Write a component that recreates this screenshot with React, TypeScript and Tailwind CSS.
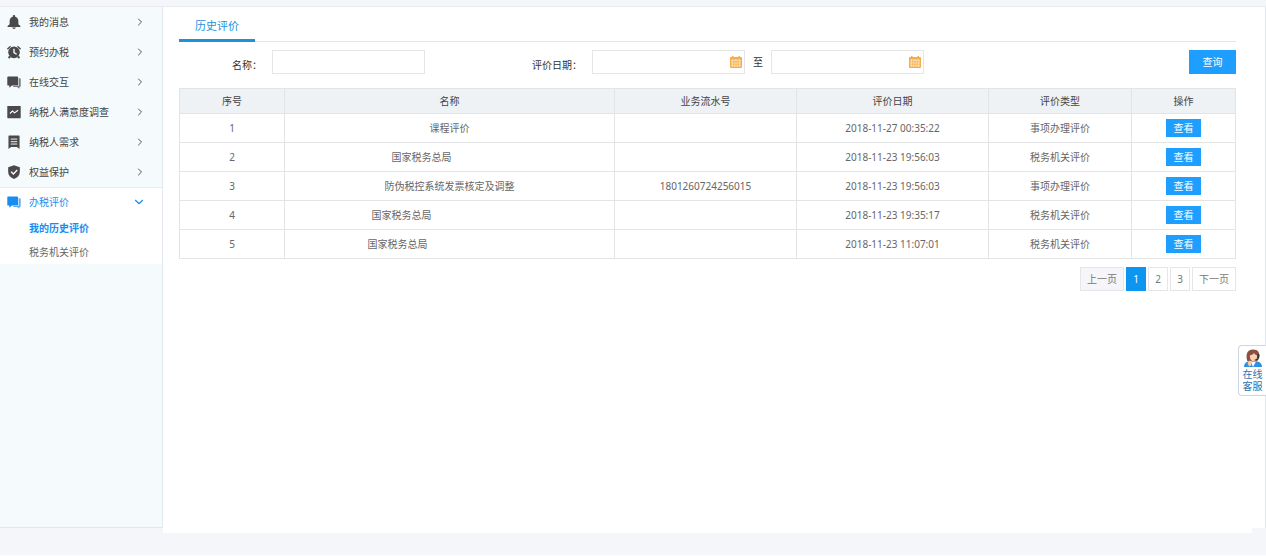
import type { ReactNode } from 'react';
import clsx from 'clsx';
import { ChevronDown, ChevronRight } from 'lucide-react';

const BellIcon = () => (
  <svg viewBox="0 0 24 24" className="size-3.5" fill="currentColor">
    <path d="M12 0c1.200 0 2 .9 2 2v.8c3.400.9 5.500 3.800 5.500 7.400V16l3.500 3v1.500H1V19l3.500-3v-5.800c0-3.600 2.100-6.500 5.500-7.400V2c0-1.100.8-2 2-2zM9 21.500h6c0 1.400-1.300 2.500-3 2.500s-3-1.100-3-2.500z" />
  </svg>
);

const ClockIcon = () => (
  <svg viewBox="0 0 24 24" className="size-3.5" fill="currentColor">
    <path fillRule="evenodd" d="M12 2.500a10 10 0 1 0 0 20 10 10 0 0 0 0-20zM10.800 6.500h2.400v5.800l4 2.600-1.300 2-5.100-3.200z" />
    <path d="M0 6 5.500 1.200l1.300 1.600L1.500 8zM24 6 18.500 1.200l-1.300 1.600L22.500 8zM4 18.500l2.500 2.500L4 23.500 1.500 21zM20 18.500 17.500 21l2.500 2.500 2.500-2.500z" />
  </svg>
);

const ChatIcon = () => (
  <svg viewBox="0 0 24 24" className="size-3.5" fill="currentColor">
    <path d="M2 2.500h15.500A1.500 1.500 0 0 1 19 4v12.500a1.500 1.500 0 0 1-1.500 1.500H8.500L4 22v-4H2A1.500 1.500 0 0 1 .5 16.500V4A1.500 1.500 0 0 1 2 2.500z" />
    <path d="M20 5.500h2A1.500 1.500 0 0 1 23.500 7v12a1.500 1.500 0 0 1-1.500 1.500h-.5v3L17 20.500h-7l1.200-1.500H18.500a1.500 1.500 0 0 0 1.500-1.500z" opacity="0.7" />
  </svg>
);

const SurveyIcon = () => (
  <svg viewBox="0 0 24 24" className="size-3.5" fill="currentColor">
    <rect x="0.500" y="1.500" width="23" height="21" rx="1" />
    <path d="M5 14.500 9.500 10.500l3.500 3 6-4.500" fill="none" stroke="#fff" strokeWidth="2" />
  </svg>
);

const NeedIcon = () => (
  <svg viewBox="0 0 24 24" className="size-3.5" fill="currentColor">
    <path d="M3.500 1h17a1 1 0 0 1 1 1v22L17 20.500H7L2.500 24V2a1 1 0 0 1 1-1z" />
    <path d="M6.500 7h11M6.500 11.500h11M6.500 15.500h11" stroke="#fff" strokeWidth="1.600" />
  </svg>
);

const ShieldIcon = () => (
  <svg viewBox="0 0 24 24" className="size-3.5" fill="currentColor">
    <path d="M12 .5 22 4v8c0 5.500-4 9.500-10 11.800C6 21.500 2 17.500 2 12V4z" />
    <path d="m7 11.500 4 4 6.500-7" fill="none" stroke="#fff" strokeWidth="2.200" />
  </svg>
);

const CalendarIcon = () => (
  <svg viewBox="0 0 12 12" className="size-3">
    <path d="M1 1h1V0h1.500v1h5V0H10v1h1a1 1 0 0 1 1 1v9a1 1 0 0 1-1 1H1a1 1 0 0 1-1-1V2a1 1 0 0 1 1-1z" fill="#f5ae4a" />
    <path d="M1.500 3.500h9v7h-9z" fill="#fdebcf" />
    <path d="M1.500 5.800h9M1.500 8.200h9M3.800 3.500v7M6 3.500v7M8.200 3.500v7" stroke="#f5ae4a" strokeWidth="0.800" />
  </svg>
);

const AgentIcon = () => (
  <svg viewBox="0 0 20 20" className="h-5 w-[18px]">
    <path d="M0 20c0-4 2.500-6 6-6.500h7.500c4 .5 6.500 2.500 6.500 6.500z" fill="#2f8fe0" />
    <path d="M7.500 13.500 10 20l3.500-6.500z" fill="#fff" />
    <path d="M3.500 13C1.500 5 4 .5 10 .5S17.500 4 16.500 9L15 13l-3 1H6z" fill="#8a5040" />
    <path d="M6.500 7c2 0 3.500-1 4.500-2.500.8 1.500 2.200 2 3.500 2.500 0 4-1.200 6.500-4 6.500S6.500 11 6.500 7z" fill="#f9d0b2" />
    <path d="M16 5.500V10c0 1.200-1.500 2.200-4 2.200" fill="none" stroke="#333" strokeWidth="1.200" />
    <rect x="15" y="5.500" width="2.200" height="4" rx="1" fill="#333" />
    <path d="M5 13.500c1.500-1 3-.5 3.500.5L8 18l-2 1.500-2-3z" fill="#f9d0b2" />
  </svg>
);

const menu: { label: string; icon: ReactNode }[] = [
  { label: '我的消息', icon: <BellIcon /> },
  { label: '预约办税', icon: <ClockIcon /> },
  { label: '在线交互', icon: <ChatIcon /> },
  { label: '纳税人满意度调查', icon: <SurveyIcon /> },
  { label: '纳税人需求', icon: <NeedIcon /> },
  { label: '权益保护', icon: <ShieldIcon /> },
];

const rows = [
  { id: 1, name: '课程评价', pad: '', serial: '', date: '2018-11-27 00:35:22', type: '事项办理评价' },
  { id: 2, name: '国家税务总局', pad: 'pr-14', serial: '', date: '2018-11-23 19:56:03', type: '税务机关评价' },
  { id: 3, name: '防伪税控系统发票核定及调整', pad: '', serial: '1801260724256015', date: '2018-11-23 19:56:03', type: '事项办理评价' },
  { id: 4, name: '国家税务总局', pad: 'pr-24', serial: '', date: '2018-11-23 19:35:17', type: '税务机关评价' },
  { id: 5, name: '国家税务总局', pad: 'pr-26', serial: '', date: '2018-11-23 11:07:01', type: '税务机关评价' },
];

function Sidebar() {
  return (
    <nav className="w-[163px] shrink-0 border-r border-b border-[#e4e7ee] bg-[#f5fafd]">
      {menu.map((item) => (
        <a key={item.label} href="#" className="flex h-[30px] items-center pl-[7px] pr-4 text-[#444]">
          <span className="text-[#4a4a4a]">{item.icon}</span>
          <span className="ml-2 flex-1">{item.label}</span>
          <ChevronRight className="size-3 text-[#555]" strokeWidth={2} />
        </a>
      ))}
      <div className="border-t border-[#e8ebf0] bg-white">
        <a href="#" className="flex h-7 items-center pl-[7px] pr-4 text-[#1a8cf0]">
          <ChatIcon />
          <span className="ml-2 flex-1">办税评价</span>
          <ChevronDown className="size-3.5" strokeWidth={2} />
        </a>
        <a href="#" className="block pl-[29px] leading-6 font-bold text-[#1a8cf0]">我的历史评价</a>
        <a href="#" className="block pl-[29px] leading-6 text-[#666]">税务机关评价</a>
      </div>
    </nav>
  );
}

function DateInput({ id }: { id: string }) {
  return (
    <div className="relative">
      <input id={id} type="text" className="block h-6 w-[153px] border border-[#e6e6e6] bg-white pl-2 pr-5 outline-none" />
      <span className="pointer-events-none absolute top-1.5 right-[3px]">
        <CalendarIcon />
      </span>
    </div>
  );
}

function SearchForm() {
  return (
    <form className="mt-2 flex items-start pl-[53px] text-[#333]">
      <label htmlFor="name" className="pt-2">名称：</label>
      <input id="name" type="text" className="ml-2.5 h-6 w-[153px] border border-[#e6e6e6] bg-white px-2 outline-none" />
      <label htmlFor="from" className="ml-[107px] mr-2.5 pt-2">评价日期：</label>
      <DateInput id="from" />
      <label htmlFor="to" className="mx-2 pt-[5px]">至</label>
      <DateInput id="to" />
      <button type="button" className="ml-auto h-6 w-[47px] bg-[#1e9fff] text-white">查询</button>
    </form>
  );
}

function HistoryTable() {
  return (
    <table className="mt-3.5 w-full table-fixed border-collapse text-center text-[#666] [&_td]:border [&_td]:border-[#e2e4e6] [&_td]:p-0 [&_th]:border [&_th]:border-[#e2e4e6] [&_th]:p-0 [&_th]:font-normal">
      <colgroup>
        <col className="w-[105px]" />
        <col />
        <col className="w-[182px]" />
        <col className="w-[192px]" />
        <col className="w-[143px]" />
        <col className="w-[104px]" />
      </colgroup>
      <thead>
        <tr className="h-[25px] bg-[#eef2f5] text-[#444]">
          <th>序号</th>
          <th>名称</th>
          <th>业务流水号</th>
          <th>评价日期</th>
          <th>评价类型</th>
          <th>操作</th>
        </tr>
      </thead>
      <tbody>
        {rows.map((row) => (
          <tr key={row.id} className="h-[29px]">
            <td>{row.id}</td>
            <td>
              <div className={row.pad}>{row.name}</div>
            </td>
            <td>{row.serial}</td>
            <td>{row.date}</td>
            <td>{row.type}</td>
            <td>
              <button type="button" className="mx-auto block h-[18px] w-[35px] bg-[#1e9fff] text-white">查看</button>
            </td>
          </tr>
        ))}
      </tbody>
    </table>
  );
}

function Pager() {
  return (
    <div className="mt-2 flex justify-end gap-0.5 text-[#777]">
      <button type="button" className="h-6 w-11 border border-[#e6e6ea] bg-[#f5f5fa]">上一页</button>
      {[1, 2, 3].map((page) => (
        <button
          key={page}
          type="button"
          className={clsx('h-6 w-5 border', page === 1 ? 'border-[#0c96f2] bg-[#0c96f2] text-white' : 'border-[#e6e6ea] bg-white')}
        >
          {page}
        </button>
      ))}
      <button type="button" className="h-6 w-11 border border-[#e6e6ea] bg-white">下一页</button>
    </div>
  );
}

export default function App() {
  return (
    <div className="flex min-h-screen flex-col bg-[#f5f6fa] pt-1.5 font-['Noto_Sans','Noto_Sans_CJK_SC',sans-serif] text-[10px] leading-[14px]">
      <div className="flex flex-1 border-t border-[#e8eaee]">
        <Sidebar />
        <main className="min-w-0 flex-1 border-r border-[#e4e7ee] bg-white pl-4 pr-[29px]">
          <div className="flex border-b border-[#e6e6e6]">
            <a href="#" className="-mb-px border-b-3 border-[#1e90dc] px-4 pt-[11px] pb-[5px] text-[11px] leading-4 text-[#1e90dc]">历史评价</a>
          </div>
          <SearchForm />
          <HistoryTable />
          <Pager />
        </main>
      </div>
      <footer className="h-7 border-b border-[#fbfbfd]">
        <div className="mr-3.5 ml-[163px] h-[5px] bg-white" />
      </footer>
      <a href="#" className="fixed top-[345px] right-0 flex w-7 flex-col items-center rounded-l border border-r-0 border-[#ccd6e6] bg-white pt-0.5 pb-[3px] leading-3 text-[#2f6fae]">
        <AgentIcon />
        <span>在线</span>
        <span>客服</span>
      </a>
    </div>
  );
}
